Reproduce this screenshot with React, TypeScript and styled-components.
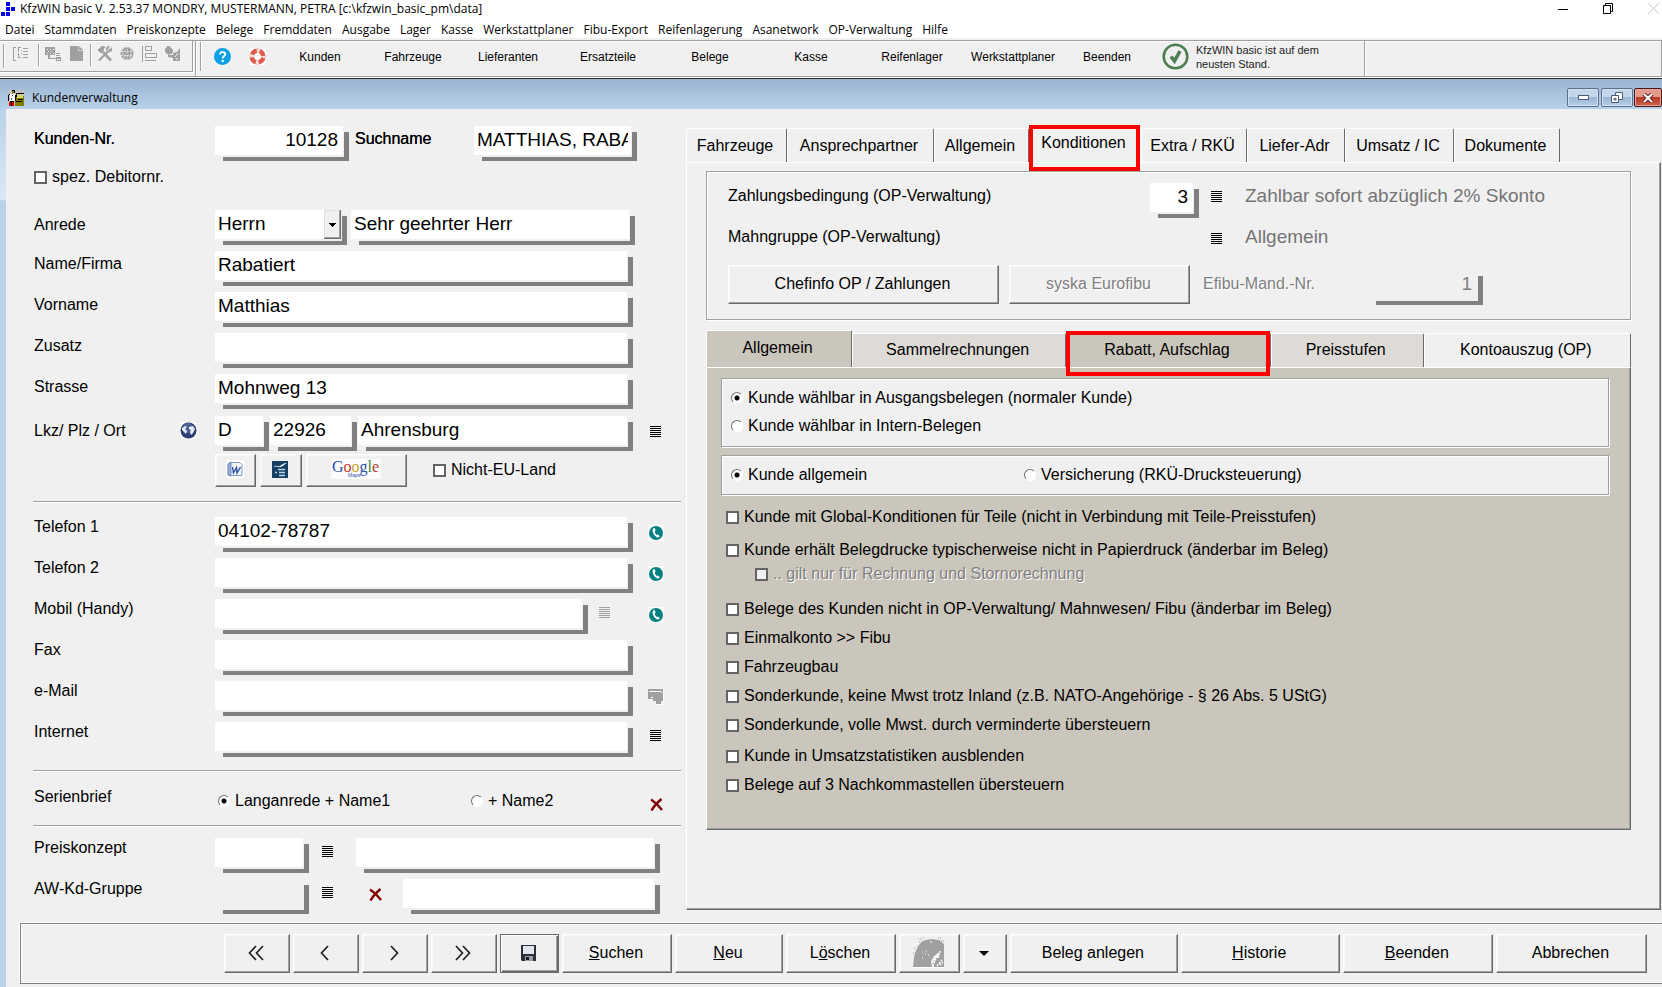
import React from 'react';
import styled, { createGlobalStyle, css } from 'styled-components';

const face = '#f0f0f0';
const sand = '#cbc6bb';
const uiFont = '"Open Sans", "Noto Sans", sans-serif';
const formFont = '"Liberation Sans", Arial, sans-serif';

const GlobalStyle = createGlobalStyle`
  *, *::before, *::after { box-sizing: border-box; }
  body { margin: 0; background: ${face}; color: #000; font: 16px/20px ${formFont}; }
  button, input, select { font: inherit; color: inherit; margin: 0; }
  svg { display: block; flex: none; }
`;

const Shell = styled.div`
  min-height: 100vh;
  display: flex;
  flex-direction: column;
  overflow-x: hidden;
`;

/* ---------- application frame ---------- */

const TitleBar = styled.header`
  display: flex;
  align-items: center;
  height: 19px;
  padding: 0 3px 2px 0;
  background: #fff;
  font: 12px/16px ${uiFont};
  white-space: nowrap;
`;

const TitleText = styled.span`
  flex: 1;
  padding-left: 4px;
`;

const CaptionButtons = styled.div`
  display: flex;
  gap: 34px;
`;

const PlainButton = styled.button`
  display: flex;
  align-items: center;
  justify-content: center;
  padding: 0;
  border: 0;
  background: none;
`;

const MenuBar = styled.nav`
  display: flex;
  gap: 10px;
  height: 19px;
  padding-left: 5px;
  background: #fff;
  font: 12px/21px ${uiFont};
  white-space: nowrap;

  a { color: #000; text-decoration: none; }
`;

const ToolBars = styled.div`
  display: flex;
  height: 41px;
  padding-top: 2px;
  border-bottom: 1px solid #303030;
`;

const Band = styled.div<{ $grow?: boolean; $w?: number; $inset?: boolean }>`
  display: flex;
  align-items: center;
  height: 37px;
  ${p => (p.$grow ? 'flex: 1;' : 'flex: none;')}
  ${p => p.$w && `width: ${p.$w}px;`}
  ${p => p.$inset && 'padding: 0 0 4px 4px;'}
  border-top: 1px solid #a0a0a0;
  border-bottom: 1px solid #a0a0a0;
  border-right: 1px solid #a0a0a0;
  box-shadow: inset 0 1px #fff, 1px 1px #fff;
`;

const IconBand = styled.div`
  display: flex;
  align-items: flex-start;
  align-self: flex-start;
  height: 31px;
  width: 193px;
  padding: 3px 0 0 3px;
  border-right: 1px solid #a0a0a0;
  border-bottom: 1px solid #a0a0a0;
  box-shadow: 1px 1px #fff;
`;

const Divider = styled.span<{ $h: number }>`
  flex: none;
  width: 1px;
  height: ${p => p.$h}px;
  background: #a0a0a0;
  box-shadow: 1px 0 #fff;
`;

const ToolGroup = styled.div<{ $pad: number; $gap: number }>`
  display: flex;
  gap: ${p => p.$gap}px;
  padding: 1px ${p => p.$pad}px 0;
`;

const HelpGroup = styled.div`
  display: flex;
  gap: 18px;
  padding-left: 13px;
  width: 72px;
`;

const ModuleGrid = styled.div`
  display: grid;
  grid-template-columns: 94px 92px 98px 102px 102px 100px 102px 100px 88px;
  font-size: 12px;
`;

const Update = styled.div`
  display: flex;
  align-items: center;
  gap: 7px;
  padding-left: 11px;
  color: #222;
  font-size: 11px;
  line-height: 14px;
`;

/* ---------- child window ---------- */

const ChildTitle = styled.div`
  display: flex;
  align-items: center;
  height: 30px;
  padding: 7px 0 0 8px;
  background: linear-gradient(#99b4d1, #b9d1ea);
  font: 12px/18px ${uiFont};
`;

const ChildTitleText = styled.span`
  flex: 1;
  padding-left: 8px;
`;

const FrameButton = styled.button<{ $danger?: boolean }>`
  display: flex;
  align-items: center;
  justify-content: center;
  width: ${p => (p.$danger ? 28 : 32)}px;
  height: 19px;
  margin-left: ${p => (p.$danger ? 1 : 2)}px;
  padding: 0;
  border: 1px solid ${p => (p.$danger ? '#4a1418' : '#5c6f8c')};
  border-radius: 2px;
  box-shadow: inset 0 0 0 1px ${p => (p.$danger ? '#e8a79c' : '#d3e2f2')};
  background: ${p =>
    p.$danger
      ? 'linear-gradient(#e59a8c 0 45%, #b93a25 50%, #d0614a)'
      : 'linear-gradient(#c3d6ea 0 45%, #9bb6d3 50%, #b7cee6)'};
`;

const ChildBody = styled.main`
  flex: 1;
  display: flex;
  flex-direction: column;
  padding-left: 6px;
  background: linear-gradient(#b9d1ea 0, #dbe9f7 90px, #b9d1ea 92px);
`;

const Client = styled.div`
  flex: 1;
  display: flex;
  flex-direction: column;
  background: ${face};
`;

const Columns = styled.div`
  flex: 1;
  display: flex;
  gap: 5px;
  padding-bottom: 13px;
`;

const CustomerForm = styled.form`
  flex: none;
  width: 675px;
  padding: 17px 0 0 27px;
`;

/* ---------- form parts ---------- */

const Section = styled.section<{ $top: number; $bottom: number; $lined?: boolean }>`
  display: flex;
  flex-direction: column;
  gap: 12px;
  padding-top: ${p => p.$top}px;
  padding-bottom: ${p => p.$bottom}px;
  ${p => p.$lined && css`
    border-top: 1px solid #a0a0a0;
    box-shadow: inset 0 1px #fff;
  `}
`;

const Row = styled.div<{ $gap?: number }>`
  display: flex;
  align-items: center;
  gap: ${p => p.$gap ?? 0}px;
  height: 29px;
`;

const RowLabel = styled.label<{ $high?: boolean; $heavy?: boolean; $w?: number }>`
  flex: none;
  align-self: flex-start;
  width: ${p => p.$w ?? 182}px;
  padding-left: ${p => (p.$w ? 0 : 1)}px;
  line-height: ${p => (p.$high ? 20 : 26)}px;
  ${p => p.$heavy && 'text-shadow: 0 0 #000;'}
`;

const Field = styled.input<{ $w: number; $right?: boolean; $flat?: boolean }>`
  flex: none;
  width: ${p => p.$w}px;
  height: 29px;
  padding: 0 3px 2px;
  border: 0;
  outline: 0;
  background: ${p => (p.$flat ? face : '#fff')};
  box-shadow: 1px 2px ${face}, 7px 7px 0 -1px #808080, 7px 5px 0 -1px #808080;
  font-size: 19px;
  text-align: ${p => (p.$right ? 'right' : 'left')};
  ${p => p.$right && 'padding-right: 5px;'}
  &:disabled { color: #808080; }
`;

const SelectBox = styled.div`
  display: flex;
  position: relative;
  width: 126px;
  height: 29px;
  background: #fff;
  box-shadow: 1px 2px ${face}, 7px 7px 0 -1px #808080, 7px 5px 0 -1px #808080;

  select {
    flex: 1;
    appearance: none;
    padding: 0 20px 2px 3px;
    border: 0;
    background: none;
    font-size: 19px;
  }
  svg { position: absolute; right: 0; top: 0; pointer-events: none; }
`;

const IconButton = styled(PlainButton)<{ $left: number; $w?: number; $low?: boolean }>`
  flex: none;
  width: ${p => p.$w ?? 16}px;
  height: ${p => (p.$low ? 31 : 27)}px;
  align-self: flex-start;
  margin-left: ${p => p.$left}px;
`;

const bevel = css`
  border: 1px solid;
  border-color: #fff #696969 #696969 #fff;
  box-shadow: inset -1px -1px #a0a0a0, inset 1px 1px #f8f8f8;
  background: ${face};
`;

const PushButton = styled.button<{ $w?: number; $h?: number; $grow?: number; $default?: boolean }>`
  ${bevel}
  display: flex;
  align-items: center;
  justify-content: center;
  ${p => (p.$grow ? `flex: ${p.$grow} 1 0;` : 'flex: none;')}
  ${p => p.$w && `width: ${p.$w}px;`}
  height: ${p => p.$h ?? 39}px;
  padding: 0 2px 2px 0;
  white-space: pre;
  ${p => p.$default && css`
    border-color: #696969;
    box-shadow: inset 1px 1px #fff, inset -1px -1px #696969, inset -2px -2px #a0a0a0;
  `}
  &:disabled { color: #808080; text-shadow: 1px 1px #fff; }
`;

const Choice = styled.label<{ $w?: number; $indent?: boolean; $dim?: boolean }>`
  display: flex;
  align-items: center;
  height: 20px;
  white-space: nowrap;
  ${p => p.$w && `width: ${p.$w}px;`}
  ${p => p.$indent && 'padding-left: 29px;'}
  ${p => p.$dim && 'color: #808080; text-shadow: 1px 1px #fff;'}
`;

const CheckInput = styled.input.attrs({ type: 'checkbox' })`
  appearance: none;
  flex: none;
  width: 13px;
  height: 13px;
  margin-right: 5px;
  border: 2px solid #646464;
  background: #fff;
  &:checked { background: #646464; background-clip: content-box; padding: 1px; }
  &:disabled { background: ${face}; }
`;

const RadioInput = styled.input.attrs({ type: 'radio' })`
  appearance: none;
  flex: none;
  width: 12px;
  height: 12px;
  margin-right: 5px;
  border: 1px solid;
  border-color: #707070 #fff #fff #707070;
  border-radius: 50%;
  background: #fff;
  &:checked { background: radial-gradient(circle, #000 2px, #fff 3px); }
`;

/* ---------- right side ---------- */

const Notebook = styled.div`
  flex: 1;
  min-width: 0;
  display: flex;
  flex-direction: column;
  padding: 16px 1px 0 0;
`;

const TabStrip = styled.div`
  display: flex;
  align-items: flex-end;
  height: 37px;
`;

const Tab = styled.button<{ $w?: number; $grow?: number; $active?: boolean; $bg?: string; $inner?: boolean }>`
  position: relative;
  ${p => (p.$grow ? `flex: ${p.$grow} 1 0;` : 'flex: none;')}
  ${p => p.$w && `width: ${p.$w}px;`}
  height: ${p => (p.$active ? 37 : 34)}px;
  padding: 0 3px ${p => (p.$active ? 3 : p.$inner ? 2 : 0)}px 0;
  border: 0;
  border-top: 1px solid #fff;
  border-left: 1px solid #fff;
  border-right: 1px solid ${p => (p.$active && !p.$inner ? face : '#696969')};
  border-radius: 2px 2px 0 0;
  background: ${p => p.$bg ?? face};
  white-space: nowrap;
`;

const Marker = styled.span<{ $over: number }>`
  position: absolute;
  top: -${p => p.$over}px;
  left: -1px;
  right: 0;
  bottom: -9px;
  z-index: 1;
  border: 4px solid #f00;
  pointer-events: none;
`;

const Page = styled.div`
  flex: 1;
  padding: 8px 29px 78px 19px;
  border: 1px solid;
  border-color: #fff #696969 #696969 #fff;
  box-shadow: inset -1px -1px #a0a0a0;
`;

const Etched = styled.div`
  border: 1px solid #a0a0a0;
  box-shadow: inset 1px 1px #fff, 1px 1px #fff;
  background: ${face};
`;

const PaymentBox = styled(Etched)`
  display: flex;
  flex-direction: column;
  height: 149px;
  padding: 11px 0 0 21px;
`;

const PayRow = styled.div<{ $h: number }>`
  display: flex;
  align-items: center;
  height: ${p => p.$h}px;
`;

const PayLabel = styled.label<{ $w: number; $dim?: boolean }>`
  flex: none;
  width: ${p => p.$w}px;
  padding-bottom: ${p => (p.$dim ? 2 : 4)}px;
  ${p => p.$dim && 'color: #808080; text-shadow: 1px 1px #fff;'}
`;

const PayValue = styled.output`
  padding: 0 0 3px 21px;
  color: #757575;
  font-size: 19px;
  white-space: nowrap;
`;

const InnerTabs = styled(TabStrip)`
  margin-top: 10px;
`;

const InnerPage = styled.div`
  height: 463px;
  padding: 10px 21px 0 14px;
  border: 1px solid;
  border-color: #fff #696969 #696969 #fff;
  box-shadow: inset -1px -1px #a0a0a0;
  background: ${sand};
`;

const RadioBox = styled(Etched)<{ $row?: boolean }>`
  display: flex;
  flex-direction: ${p => (p.$row ? 'row' : 'column')};
  gap: ${p => (p.$row ? 0 : 8)}px;
  padding: 9px;
  height: ${p => (p.$row ? 40 : 69)}px;
  margin-bottom: 8px;
`;

const CheckGroup = styled.div<{ $top: number; $gap?: number }>`
  display: flex;
  flex-direction: column;
  gap: ${p => p.$gap ?? 9}px;
  padding: ${p => p.$top}px 0 0 5px;
`;

const Footer = styled.footer`
  display: flex;
  gap: 3px;
  height: 61px;
  margin: 0 0 3px 14px;
  padding: 10px 15px 0 203px;
  border: 1px solid #808080;
  border-right: 0;
  box-shadow: -1px -1px #fff, inset 1px 1px #fff, inset 0 -1px #fff;
`;

/* ---------- icons ---------- */

const ListIcon = ({ dim }: { dim?: boolean }) => (
  <svg width="12" height="12" shapeRendering="crispEdges" stroke={dim ? '#a0a0a0' : '#000'}>
    <path d="M0 .5h11M0 2.500h11M0 4.500h11M0 6.500h11M0 8.500h11M0 10.500h11" />
  </svg>
);

const CrossIcon = () => (
  <svg width="13" height="13" fill="none" stroke="#800000" strokeWidth="2.400">
    <path d="M1 1.500C5 4 9 8 12 12M11.500 1C8 4 4 8 1.500 12.500" />
  </svg>
);

const PhoneIcon = () => (
  <svg width="16" height="16">
    <rect width="16" height="16" fill="#fafafa" />
    <circle cx="8" cy="8" r="7" fill="#008080" />
    <path d="M5 3.500C3.800 6 5.500 10.500 9.500 12.800L12 11.500L10 9.500L8.800 10C7.500 9 6.800 7.500 6.800 6.300L7.600 5.500L6.800 3Z" fill="#fff" />
  </svg>
);

const MailIcon = () => (
  <svg width="16" height="17" shapeRendering="crispEdges">
    <path d="M0 1h15v12h-2v3h-5v-3H5v-2H0z" fill="#a0a0a0" />
    <path d="M1 3.500h12M3 9.500h2M13.500 4v1M9 16.500h6M15.500 2v12" stroke="#fff" />
  </svg>
);

const GlobeIcon = () => (
  <svg width="17" height="17">
    <rect width="17" height="17" fill="#f8f8f8" />
    <circle cx="8.500" cy="8.500" r="8" fill="#2c3f73" />
    <circle cx="8" cy="6" r="5" fill="#6478a8" opacity=".6" />
    <path d="M2 6l3-2 2 1-2 2 2 2-1 3-2-2-2-2zM9 5l4-1 2 3-2 4-2 2-1-3 1-2-2-1z" fill="#e6ebf5" />
  </svg>
);

const tool = { width: 16, height: 18, fill: '#a0a0a0', stroke: 'none' } as const;

const TreeIcon = () => (
  <svg {...tool} shapeRendering="crispEdges"><path d="M0 2h3v1H1v12h2v1H0zM5 2h3v1H6v4H5v1h1v4h2v1H5zM8 5h1v1H8zM8 8h1v1H8zM10 3h5v1h-5zM10 6h5v1h-5zM10 9h5v1h-5zM10 12h5v1h-5z" /></svg>
);
const NetIcon = () => (
  <svg {...tool} width={17} shapeRendering="crispEdges"><path d="M0 2h10v8H0zM3 10h2v3h6v-1h5v4h-5v-2H3z" /><path d="M11 8h4v1h-4zM11 10h4v1h-4z" /><path d="M2 4.500h1M5 4.500h1M8 4.500h1M3 6.500h1M6 6.500h1M2 8.500h1M5 8.500h1M8 8.500h1M12 14.500h3" stroke="#f0f0f0" /></svg>
);
const DocIcon = () => (
  <svg {...tool} width={14}><path d="M0 1h9l4 4v11H0z" /><path d="M8.500 1v4.500h5" stroke="#f0f0f0" fill="none" strokeWidth=".6" /></svg>
);
const ToolsIcon = () => (
  <svg {...tool} fill="none" stroke="#a0a0a0"><path d="M2 15.500L11 6.500" strokeWidth="2" /><path d="M14.500 3.500l-2 2-2-2 1.500-2c-2 0-3.500 2-2 4.500 2 1.500 5 .5 4.500-2.500z" strokeWidth="1.200" /><path d="M1 5l4-3.500 3 .5-2 2 .5 2L4 8z" fill="#a0a0a0" /><path d="M6 7l8 8.500" strokeWidth="2.600" /></svg>
);
const WorldIcon = () => (
  <svg {...tool} width={15}><circle cx="7" cy="8.500" r="6.500" /><path d="M1 6.500h12M1 10.500h12M4 2c-2 4-1 9 1 12M10 2c2 4 1 9-1 12M7 1v14" stroke="#f0f0f0" fill="none" strokeWidth=".8" strokeDasharray="2 1" /></svg>
);
const AlignIcon = () => (
  <svg {...tool} fill="none" stroke="#a0a0a0" shapeRendering="crispEdges"><path d="M.5 1v16M3.500 1.500h6v4h-6zM3.500 8.500h11v4h-11zM3 15.500h11" /></svg>
);
const ShapesIcon = () => (
  <svg {...tool}><path d="M0 4c0-1 2-1 2-3h3c0 2 3 2 3 5l-1 3H2L0 7z" /><path d="M8 8l4-1 3-4v13H8v-3l-5-1V9h5z" /><path d="M8 9.500H4M13 8l-3 4M11 14h2" stroke="#f0f0f0" /></svg>
);

const HelpIcon = () => (
  <svg width="17" height="17">
    <circle cx="8.500" cy="8.500" r="8.500" fill="#0b9fe4" />
    <path d="M6 6.500c0-3.500 5.300-3 5.300-.3 0 1.800-2.600 1.900-2.600 4.300" fill="none" stroke="#fff" strokeWidth="1.800" />
    <circle cx="8.700" cy="13" r="1.200" fill="#fff" />
  </svg>
);

const BuoyIcon = () => (
  <svg width="17" height="17">
    <rect width="17" height="17" fill="#fff" />
    <circle cx="8.500" cy="8.500" r="5.800" fill="none" stroke="#e05a4e" strokeWidth="4.600" />
    <circle cx="8.500" cy="8.500" r="5.800" fill="none" stroke="#f6dcd8" strokeWidth="4.600" strokeDasharray="3 6.110" strokeDashoffset="1.500" />
  </svg>
);

const OkIcon = () => (
  <svg width="27" height="27" fill="none">
    <circle cx="13.500" cy="13.500" r="11.800" stroke="#4d7f50" strokeWidth="2.600" />
    <path d="M9 13.500l3.500 4.500 5.500-10" stroke="#4d7f50" strokeWidth="3.600" />
  </svg>
);

const AppIcon = () => (
  <svg width="16" height="17" fill="#0000ee" shapeRendering="crispEdges">
    <path d="M6 2h4v4H6zM6 7h4v4H6zM11 7h4v4h-4zM1 12h4v4H1zM6 12h4v4H6z" />
  </svg>
);

const CustomerIcon = () => (
  <svg width="16" height="16" shapeRendering="crispEdges">
    <rect width="16" height="16" fill="#c0c0c0" />
    <path d="M8 6h8v10H7v-4z" fill="#808000" />
    <path d="M8 3h8v1H8zM7 5l2-1v3H7zM10 9h5v1h-5zM8 11h6v1H8zM4 0h3v3H4zM1 4h1v1H1zM0 5h1v6H0zM7 6h1v5H7z" fill="#000" />
    <path d="M4 1h2v2H4z" fill="#808000" />
    <path d="M2 4h5v7H2z" fill="#fff" />
    <path d="M4 5h1v1H4zM3 8h1v2H3z" fill="#555" />
    <path d="M9 5h6v3H9z" fill="#d8d860" />
    <path d="M1 12h2v4H1zM4 12h2v4H4z" fill="#e00000" />
    <path d="M3 11h1v5H3zM2 11h4v1H2z" fill="#000" />
  </svg>
);

const WordIcon = () => (
  <svg width="18" height="18">
    <rect width="18" height="18" fill="#fff" />
    <path d="M2 4l3-2v14l-3-1z" fill="#9fb4da" stroke="#5c7ab5" />
    <path d="M5 2.500h9l2 2v11H5z" fill="#f2f6fd" stroke="#7f9ac9" />
    <path d="M6.500 7l1 6 3-5.500.5 5.500L14.500 7" fill="none" stroke="#2a4f9c" strokeWidth="1.400" />
  </svg>
);

const OfficeIcon = () => (
  <svg width="16" height="17">
    <rect width="16" height="17" fill="#153f63" />
    <path d="M1 6c3-3 5 0 7-1s3-3 7-3c-3 1-4 4-7 4S4 5 1 6z" fill="#fff" />
    <path d="M6 8.500h7M3 11.500h2M7 11.500h6M7 14.500h6" stroke="#b9d2e6" strokeWidth="1.400" />
  </svg>
);

const GoogleIcon = () => (
  <svg width="50" height="20" viewBox="0 0 50 20" fontFamily="Liberation Serif, serif">
    <rect width="50" height="20" fill="#fcfcfc" />
    <text x="1" y="13" fontSize="16">
      <tspan fill="#2a4fb0">G</tspan><tspan fill="#c0392b">o</tspan><tspan fill="#c9a227">o</tspan><tspan fill="#2a4fb0">g</tspan><tspan fill="#3a8a3f">l</tspan><tspan fill="#c0392b">e</tspan>
    </text>
    <text x="17" y="18" fontSize="5" fill="#3355aa" fontFamily="Liberation Sans, sans-serif">Maps</text>
  </svg>
);

const Chevrons = ({ d }: { d: string }) => (
  <svg width="18" height="16" fill="none" stroke="#222" strokeWidth="1.700"><path d={d} /></svg>
);

const DiskIcon = () => (
  <svg width="15" height="16">
    <path d="M0 0h15v16H1l-1-1z" fill="#2c2f3a" />
    <rect x="2" y="1" width="11" height="8" fill="#dfe6ee" />
    <rect x="4" y="11" width="8" height="5" fill="#9aa0aa" />
    <rect x="5" y="12" width="3" height="3" fill="#15171f" />
  </svg>
);

const StampIcon = () => (
  <svg width="34" height="31">
    <path d="M1 30l1-10C4 11 8 4 14 3l6-1 7 1 5 4v23H22l-1-4 3-5h3l1-6-6 4-3 5 1 6z" fill="#a0a0a0" />
    <path d="M21 29l2-5 2-6 4-4M25 29l5-6M28 28l3-3" stroke="#fff" strokeWidth="1.400" strokeDasharray="2 1" fill="none" />
    <path d="M6 2h3M7 5h4M2 11h2M1 16h2M11 1h2M26 1h4M29 4h3" stroke="#a0a0a0" strokeDasharray="1 1" />
    <path d="M10 15h1M14 14h1M16 18h1M10 21h1M13 17h1M18 5h2" stroke="#fff" />
    <path d="M1 30.500h32" stroke="#fff" />
  </svg>
);

const CaretIcon = () => (
  <svg width="10" height="6"><path d="M0 1h10L5 6z" /></svg>
);

const DropIcon = () => (
  <svg width="17" height="29" shapeRendering="crispEdges">
    <rect width="17" height="29" fill="#f0f0f0" />
    <path d="M.5 28V.5H16" stroke="#e0e0e0" fill="none" />
    <path d="M16.500 0v28.500H0" stroke="#696969" fill="none" />
    <path d="M15.500 1v26.500H1" stroke="#a0a0a0" fill="none" />
    <path d="M5 13h7l-3.500 4z" />
  </svg>
);

/* ---------- content ---------- */

const menus = ['Datei', 'Stammdaten', 'Preiskonzepte', 'Belege', 'Fremddaten', 'Ausgabe', 'Lager', 'Kasse', 'Werkstattplaner', 'Fibu-Export', 'Reifenlagerung', 'Asanetwork', 'OP-Verwaltung', 'Hilfe'];
const modules = ['Kunden', 'Fahrzeuge', 'Lieferanten', 'Ersatzteile', 'Belege', 'Kasse', 'Reifenlager', 'Werkstattplaner', 'Beenden'];

const Check = ({ children, indent, disabled }: { children: string; indent?: boolean; disabled?: boolean }) => (
  <Choice $indent={indent} $dim={disabled}>
    <CheckInput disabled={disabled} />
    {children}
  </Choice>
);

const Radio = ({ children, name, on, w }: { children: string; name: string; on?: boolean; w?: number }) => (
  <Choice $w={w}>
    <RadioInput name={name} defaultChecked={on} />
    {children}
  </Choice>
);

const TextRow = ({ id, label, value, w = 412, high, children }: { id: string; label: string; value?: string; w?: number; high?: boolean; children?: React.ReactNode }) => (
  <Row>
    <RowLabel htmlFor={id} $high={high}>{label}</RowLabel>
    <Field id={id} $w={w} defaultValue={value} />
    {children}
  </Row>
);

const CallButton = ({ left = 21 }: { left?: number }) => (
  <IconButton type="button" $low $left={left} aria-label="Anrufen"><PhoneIcon /></IconButton>
);

const IconGap = styled.span<{ $w: number }>`
  flex: none;
  width: ${p => p.$w}px;
`;

const AnredeLabel = styled(RowLabel)`
  width: 172px;
  line-height: 30px;
`;

const LkzLabel = styled(RowLabel)`
  width: 147px;
  line-height: 30px;
`;

const AddressBlock = styled.div`
  display: flex;
  flex-direction: column;
  gap: 8px;
  padding-top: 1px;
`;

const GlobeSlot = styled.span`
  flex: none;
  width: 28px;
  margin-left: -7px;
`;

const ButtonRow = styled.div`
  display: flex;
  align-items: center;
  gap: 4px;
  height: 34px;
  padding-left: 182px;

  label { margin-left: 22px; }
`;

const SerialRow = styled.div`
  display: flex;
  align-items: center;
  height: 55px;
  border-top: 1px solid #a0a0a0;
  box-shadow: inset 0 1px #fff;
`;

const SerialLabel = styled.span`
  flex: none;
  width: 182px;
  padding: 0 0 2px 1px;
`;

const RadioPair = styled.div`
  display: flex;
  padding: 6px 0 0 3px;
  width: 412px;
`;

const ClearSerial = styled(PlainButton)`
  margin: 12px 0 0 23px;
`;

const DebtorRow = styled.div`
  padding: 12px 0 0 1px;
  height: 43px;
`;

const PayIcon = styled(PlainButton)`
  flex: none;
  width: 14px;
  margin-left: 17px;
`;

const SyskaButton = styled(PushButton)`
  margin: 0 13px 0 10px;
`;

export default function App() {
  return (
    <Shell>
      <GlobalStyle />
      <TitleBar>
        <AppIcon />
        <TitleText>KfzWIN basic V. 2.53.37 MONDRY, MUSTERMANN, PETRA [c:\kfzwin_basic_pm\data]</TitleText>
        <CaptionButtons>
          <PlainButton aria-label="Minimieren"><svg width="11" height="11"><path d="M0 6.500h10" stroke="#000" /></svg></PlainButton>
          <PlainButton aria-label="Wiederherstellen"><svg width="11" height="11" fill="none" stroke="#000"><path d="M.5 2.500h7v8h-7zM2.500 2.500v-2h7v8h-2" /></svg></PlainButton>
          <PlainButton aria-label="Schließen"><svg width="11" height="11" stroke="#c8c8c8"><path d="M0 0l11 11M11 0L0 11" /></svg></PlainButton>
        </CaptionButtons>
      </TitleBar>
      <MenuBar>
        {menus.map(m => <a key={m} href="#">{m}</a>)}
      </MenuBar>
      <ToolBars>
        <Band $w={196}>
          <IconBand>
            <Divider $h={24} />
            <ToolGroup $pad={9} $gap={0}><TreeIcon /></ToolGroup>
            <Divider $h={22} />
            <ToolGroup $pad={6} $gap={8}><NetIcon /><DocIcon /></ToolGroup>
            <Divider $h={22} />
            <ToolGroup $pad={6} $gap={7}><ToolsIcon /><WorldIcon /><AlignIcon /><ShapesIcon /></ToolGroup>
          </IconBand>
        </Band>
        <Band $w={1169} $inset>
          <Divider $h={29} />
          <HelpGroup>
            <PlainButton aria-label="Hilfe"><HelpIcon /></PlainButton>
            <PlainButton aria-label="Support"><BuoyIcon /></PlainButton>
          </HelpGroup>
          <ModuleGrid>
            {modules.map(m => <PlainButton key={m}>{m}</PlainButton>)}
          </ModuleGrid>
          <Update>
            <OkIcon />
            <span>KfzWIN basic ist auf dem<br />neusten Stand.</span>
          </Update>
        </Band>
        <Band $grow />
      </ToolBars>

      <ChildTitle>
        <CustomerIcon />
        <ChildTitleText>Kundenverwaltung</ChildTitleText>
        <FrameButton aria-label="Fenster minimieren"><svg width="11" height="5"><rect x=".5" y=".5" width="10" height="4" fill="#fff" stroke="#4b5c78" /></svg></FrameButton>
        <FrameButton aria-label="Fenster wiederherstellen"><svg width="12" height="11" fill="#fff" stroke="#4b5c78"><path d="M4.500.5h7v7h-7z" /><path d="M.5 3.500h7v7h-7zM3 6.500h2v1.500H3z" /></svg></FrameButton>
        <FrameButton $danger aria-label="Fenster schließen"><svg width="12" height="10"><path d="M2 1l8 8M10 1L2 9" stroke="#5a2020" strokeWidth="4" /><path d="M2 1l8 8M10 1L2 9" stroke="#fff" strokeWidth="2.200" /></svg></FrameButton>
      </ChildTitle>

      <ChildBody>
        <Client>
          <Columns>
            <CustomerForm>
              <Row>
                <RowLabel htmlFor="nr" $heavy>Kunden-Nr.</RowLabel>
                <Field id="nr" $w={128} $right defaultValue="10128" />
                <IconGap $w={12} />
                <RowLabel htmlFor="such" $heavy $w={119}>Suchname</RowLabel>
                <Field id="such" $w={157} defaultValue="MATTHIAS, RABATIERT" />
              </Row>
              <DebtorRow><Check>spez. Debitornr.</Check></DebtorRow>
              <Section $top={12} $bottom={14}>
                <Row $gap={10}>
                  <AnredeLabel htmlFor="anrede">Anrede</AnredeLabel>
                  <SelectBox>
                    <select id="anrede" defaultValue="Herrn"><option>Herrn</option><option>Frau</option></select>
                    <DropIcon />
                  </SelectBox>
                  <Field aria-label="Briefanrede" $w={278} defaultValue="Sehr geehrter Herr" />
                </Row>
                <TextRow id="name" label="Name/Firma" value="Rabatiert" />
                <TextRow id="vorname" label="Vorname" value="Matthias" />
                <TextRow id="zusatz" label="Zusatz" />
                <TextRow id="strasse" label="Strasse" value="Mohnweg 13" />
                <AddressBlock>
                  <Row $gap={7}>
                    <LkzLabel htmlFor="lkz">Lkz/ Plz / Ort</LkzLabel>
                    <GlobeSlot><GlobeIcon /></GlobeSlot>
                    <Field id="lkz" $w={48} defaultValue="D" />
                    <Field aria-label="Plz" $w={81} defaultValue="22926" />
                    <Field aria-label="Ort" $w={269} defaultValue="Ahrensburg" />
                    <IconButton type="button" $low $left={15} $w={14} aria-label="Orte"><ListIcon /></IconButton>
                  </Row>
                  <ButtonRow>
                    <PushButton type="button" $w={41} $h={33} aria-label="Word"><WordIcon /></PushButton>
                    <PushButton type="button" $w={42} $h={33} aria-label="Office"><OfficeIcon /></PushButton>
                    <PushButton type="button" $w={101} $h={33}><GoogleIcon /></PushButton>
                    <Check>Nicht-EU-Land</Check>
                  </ButtonRow>
                </AddressBlock>
              </Section>
              <Section $top={15} $bottom={19} $lined>
                <TextRow id="tel1" label="Telefon 1" value="04102-78787" high><CallButton /></TextRow>
                <TextRow id="tel2" label="Telefon 2" high><CallButton /></TextRow>
                <TextRow id="mobil" label="Mobil (Handy)" w={367} high>
                  <IconButton type="button" disabled $left={16} $w={14} aria-label="Mobilnummern"><ListIcon dim /></IconButton>
                  <CallButton left={36} />
                </TextRow>
                <TextRow id="fax" label="Fax" high />
                <TextRow id="mail" label="e-Mail" high><IconButton type="button" disabled $low $left={21} aria-label="E-Mail senden"><MailIcon /></IconButton></TextRow>
                <TextRow id="web" label="Internet" high><IconButton type="button" $left={22} $w={14} aria-label="Internetadressen"><ListIcon /></IconButton></TextRow>
              </Section>
              <SerialRow>
                <SerialLabel>Serienbrief</SerialLabel>
                <RadioPair>
                  <Radio name="serie" on w={253}>Langanrede + Name1</Radio>
                  <Radio name="serie">+ Name2</Radio>
                </RadioPair>
                <ClearSerial type="button" aria-label="Serienbrief löschen"><CrossIcon /></ClearSerial>
              </SerialRow>
              <Section $top={12} $bottom={0} $lined>
                <Row>
                  <RowLabel htmlFor="preis" $high>Preiskonzept</RowLabel>
                  <Field id="preis" $w={88} />
                  <IconButton type="button" $left={18} $w={14} aria-label="Preiskonzepte"><ListIcon /></IconButton>
                  <IconGap $w={21} />
                  <Field aria-label="Bezeichnung Preiskonzept" $w={298} />
                </Row>
                <Row>
                  <RowLabel htmlFor="aw" $high>AW-Kd-Gruppe</RowLabel>
                  <Field id="aw" $w={88} $flat />
                  <IconButton type="button" $left={18} $w={14} aria-label="AW-Gruppen"><ListIcon /></IconButton>
                  <IconButton type="button" $left={33} $w={14} $low aria-label="Gruppe löschen"><CrossIcon /></IconButton>
                  <IconGap $w={21} />
                  <Field aria-label="Bezeichnung AW-Kd-Gruppe" $w={251} />
                </Row>
              </Section>
            </CustomerForm>

            <Notebook>
              <TabStrip role="tablist">
                <Tab $w={101}>Fahrzeuge</Tab>
                <Tab $w={147}>Ansprechpartner</Tab>
                <Tab $w={95}>Allgemein</Tab>
                <Tab $w={112} $active>Konditionen<Marker $over={1} /></Tab>
                <Tab $w={106}>Extra / RKÜ</Tab>
                <Tab $w={98}>Liefer-Adr</Tab>
                <Tab $w={109}>Umsatz / IC</Tab>
                <Tab $w={106}>Dokumente</Tab>
              </TabStrip>
              <Page>
                <PaymentBox>
                  <PayRow $h={29}>
                    <PayLabel htmlFor="zb" $w={422}>Zahlungsbedingung (OP-Verwaltung)</PayLabel>
                    <Field id="zb" $w={43} $right defaultValue="3" />
                    <IconButton type="button" $left={17} $w={14} aria-label="Zahlungsbedingungen"><ListIcon /></IconButton>
                    <PayValue>Zahlbar sofort abzüglich 2% Skonto</PayValue>
                  </PayRow>
                  <PayRow $h={53}>
                    <PayLabel as="span" $w={465}>Mahngruppe (OP-Verwaltung)</PayLabel>
                    <PayIcon type="button" aria-label="Mahngruppen"><ListIcon /></PayIcon>
                    <PayValue>Allgemein</PayValue>
                  </PayRow>
                  <PayRow $h={39}>
                    <PushButton type="button" $w={271}>Chefinfo OP / Zahlungen</PushButton>
                    <SyskaButton type="button" disabled $w={181}>syska Eurofibu</SyskaButton>
                    <PayLabel htmlFor="efibu" $w={165} $dim>Efibu-Mand.-Nr.</PayLabel>
                    <Field id="efibu" $w={109} $right $flat disabled defaultValue="1" />
                  </PayRow>
                </PaymentBox>
                <InnerTabs role="tablist">
                  <Tab $grow={145} $active $inner $bg={sand}>Allgemein</Tab>
                  <Tab $grow={215} $inner $bg="#dedbd6">Sammelrechnungen</Tab>
                  <Tab $grow={205} $inner $bg={sand}>Rabatt, Aufschlag<Marker $over={3} /></Tab>
                  <Tab $grow={152} $inner $bg="#dedbd6">Preisstufen</Tab>
                  <Tab $grow={208} $inner>Kontoauszug (OP)</Tab>
                </InnerTabs>
                <InnerPage>
                  <RadioBox>
                    <Radio name="wahl" on>Kunde wählbar in Ausgangsbelegen (normaler Kunde)</Radio>
                    <Radio name="wahl">Kunde wählbar in Intern-Belegen</Radio>
                  </RadioBox>
                  <RadioBox $row>
                    <Radio name="art" on w={293}>Kunde allgemein</Radio>
                    <Radio name="art">Versicherung (RKÜ-Drucksteuerung)</Radio>
                  </RadioBox>
                  <CheckGroup $top={4}>
                    <Check>Kunde mit Global-Konditionen für Teile (nicht in Verbindung mit Teile-Preisstufen)</Check>
                  </CheckGroup>
                  <CheckGroup $top={13} $gap={4}>
                    <Check>Kunde erhält Belegdrucke typischerweise nicht in Papierdruck (änderbar im Beleg)</Check>
                    <Check indent disabled>.. gilt nur für Rechnung und Stornorechnung</Check>
                  </CheckGroup>
                  <CheckGroup $top={15}>
                    <Check>Belege des Kunden nicht in OP-Verwaltung/ Mahnwesen/ Fibu (änderbar im Beleg)</Check>
                    <Check>{'Einmalkonto >> Fibu'}</Check>
                    <Check>Fahrzeugbau</Check>
                    <Check>Sonderkunde, keine Mwst trotz Inland (z.B. NATO-Angehörige - § 26 Abs. 5 UStG)</Check>
                    <Check>Sonderkunde, volle Mwst. durch verminderte übersteuern</Check>
                  </CheckGroup>
                  <CheckGroup $top={11}>
                    <Check>Kunde in Umsatzstatistiken ausblenden</Check>
                    <Check>Belege auf 3 Nachkommastellen übersteuern</Check>
                  </CheckGroup>
                </InnerPage>
              </Page>
            </Notebook>
          </Columns>

          <Footer>
            <PushButton $w={66} aria-label="Erster"><Chevrons d="M9 1L2.500 8 9 15M16 1L9.500 8 16 15" /></PushButton>
            <PushButton $w={66} aria-label="Zurück"><Chevrons d="M12 1L5.500 8 12 15" /></PushButton>
            <PushButton $w={66} aria-label="Weiter"><Chevrons d="M6 1l6.500 7L6 15" /></PushButton>
            <PushButton $w={66} aria-label="Letzter"><Chevrons d="M2 1l6.500 7L2 15M9 1l6.500 7L9 15" /></PushButton>
            <PushButton $w={59} $default aria-label="Speichern"><DiskIcon /></PushButton>
            <PushButton $w={110}><u>S</u>uchen</PushButton>
            <PushButton $w={108}><u>N</u>eu</PushButton>
            <PushButton $w={110}>L<u>ö</u>schen</PushButton>
            <PushButton $w={61} disabled aria-label="Stempel"><StampIcon /></PushButton>
            <PushButton $w={44} aria-label="Auswahl"><CaretIcon /></PushButton>
            <PushButton $grow={168}>Beleg anlegen</PushButton>
            <PushButton $grow={159}><u>H</u>istorie</PushButton>
            <PushButton $grow={150}><u>B</u>eenden</PushButton>
            <PushButton $grow={151}>Abbrechen</PushButton>
          </Footer>
        </Client>
      </ChildBody>
    </Shell>
  );
}
